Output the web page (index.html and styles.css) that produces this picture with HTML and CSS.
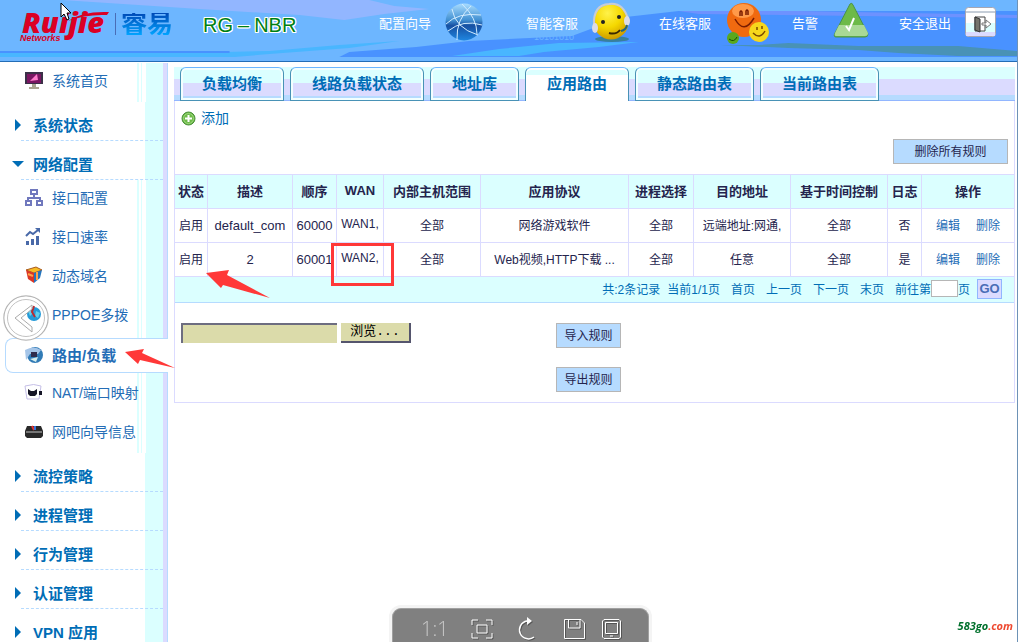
FILE: index.html
```html
<!DOCTYPE html>
<html lang="zh-CN">
<head>
  <meta charset="UTF-8">
  <meta name="viewport" content="width=device-width, initial-scale=1.0">
  <title>RG-NBR 应用路由</title>
  <link rel="stylesheet" href="styles.css">
</head>
<body>
  <div class="page">
    <header class="header">
      <svg class="header-bg" viewBox="0 0 1019 61" preserveAspectRatio="none" aria-hidden="true">
        <path d="M62 0H370L395 6L430 9L385 14L345 20L300 15L200 9Z" fill="#92b6ff"/>
        <path d="M340 57L350 52L417 47L470 41L573 36L600 26L627 17L680 11H1019V57Z" fill="#4992ff"/>
        <path d="M680 11H800L1019 15V18L700 14Z" fill="#6d92ff"/>
        <path d="M453 56L500 49L560 43L640 42L600 47L545 52L520 56Z" fill="#49b6ff"/>
        <path d="M0 52H225L270 51L340 45L400 41L350 48L270 54L235 57H0Z" fill="#49b6ff"/>
        <path d="M0 51H230V53H0Z" fill="#4992ff"/>
        <path d="M722 45H760L790 43L860 46H960L1019 51V56H960L900 53L860 50L790 48Z" fill="#4992b6"/>
        <text x="486" y="37" class="bits-big">10110</text>
        <text x="535" y="40" class="bits-small">10101010</text>
      </svg>
      <div class="logo">
        <div class="logo-mark">
          <span class="logo-name">Ruijie</span>
          <span class="logo-sub">Networks</span>
          <svg class="logo-swoosh" width="42" height="11" viewBox="0 0 42 11" aria-hidden="true"><path d="M0 10Q14 0 41 1L39 4Q18 3 0 10Z" fill="#db0024"/></svg>
        </div>
        <span class="logo-cn">睿易</span>
      </div>
      <div class="model">RG<span class="dash">–</span>NBR</div>
      <nav class="top-nav">
        <a href="#">配置向导
          <svg width="53" height="40" viewBox="0 0 53 40">
            <defs><linearGradient id="globe" x1="0" y1="0" x2="0" y2="1"><stop offset="0" stop-color="#a8dcff"/><stop offset=".45" stop-color="#4190d2"/><stop offset=".6" stop-color="#1750a2"/><stop offset="1" stop-color="#1f86e0"/></linearGradient></defs>
            <circle cx="19" cy="20" r="18.500" fill="url(#globe)"/>
            <g fill="none" stroke="#d2ecff" stroke-width="1"><path d="M7 7Q10 26 33 33M1 22Q13 10 36 13M17 2Q32 16 32 32M12 38Q11 17 26 4M3 29Q18 17 37 23"/></g>
          </svg></a>
        <a href="#">智能客服
          <svg width="39" height="40" viewBox="0 0 39 40">
            <defs><radialGradient id="face" cx=".4" cy=".25" r=".8"><stop offset="0" stop-color="#fff24a"/><stop offset=".5" stop-color="#f5d800"/><stop offset="1" stop-color="#c79200"/></radialGradient></defs>
            <ellipse cx="20" cy="37" rx="17" ry="3" fill="#38809c"/>
            <circle cx="19" cy="20" r="17.500" fill="url(#face)"/>
            <path d="M2 23Q1 3 17 2Q31 0 36 17" fill="none" stroke="#c8ccd6" stroke-width="2"/>
            <ellipse cx="3" cy="26" rx="3" ry="5" fill="#dcdce6"/><ellipse cx="35" cy="19" rx="3" ry="5" fill="#dcdce6"/>
            <circle cx="11" cy="20" r="2" fill="#222"/><circle cx="27" cy="15" r="2" fill="#222"/>
            <path d="M17 31Q24 33 28 28" fill="none" stroke="#3a2800" stroke-width="2"/><path d="M35 23Q34 28 29 29" fill="none" stroke="#24647c" stroke-width="2"/>
          </svg></a>
        <a href="#">在线客服
          <svg width="39" height="40" viewBox="0 0 39 40">
            <circle cx="19" cy="18" r="17" fill="#f06a10"/><ellipse cx="18" cy="9" rx="11" ry="7" fill="#ff9a49"/>
            <path d="M15 14V10Q16 8 17 10V14M21 13V9Q22 7 23 9V13M10 17Q19 33 29 16" fill="none" stroke="#7a1c00" stroke-width="1.500"/>
            <circle cx="34" cy="30" r="10" fill="#f7d71c"/><path d="M32 28V25M37 27V24M28 31Q35 38 40 29" fill="none" stroke="#7a4a00" stroke-width="1.500"/>
            <circle cx="8" cy="36" r="6" fill="#5aa81e"/><path d="M4 37Q9 41 12 35" fill="none" stroke="#174d00"/>
          </svg></a>
        <a href="#">告警
          <svg width="39" height="40" viewBox="0 0 39 40">
            <path d="M18 2Q20 0 21 3L36 32Q36 35 33 35H4Q1 35 3 31Z" fill="#6dba49" stroke="#4a9448"/>
            <path d="M7 23H32L36 31Q36 34 33 34H4Q2 34 3 31Z" fill="#a9d996"/>
            <path d="M14 24L17 28L22 16" fill="none" stroke="#fff" stroke-width="2"/>
          </svg></a>
        <a href="#">安全退出
          <svg width="31" height="31" viewBox="0 0 31 31">
            <rect x=".5" y=".5" width="30" height="29" rx="3" fill="#fff" stroke="#a6a6b2"/>
            <path d="M1 16H30V25H1Z" fill="#dbffff"/><path d="M1 25H30V29H1Z" fill="#dbdbff"/><path d="M1 5H30" stroke="#8c9cb0"/>
            <path d="M10 10H20V24H10Z" fill="#fff" stroke="#444"/><path d="M10 10L15 12V25L10 23Z" fill="#74746c" stroke="#333"/>
            <path d="M17 16H21V13L26 17L21 21V18H17Z" fill="#fff" stroke="#777"/>
          </svg></a>
      </nav>
    </header>

    <div class="layout">
      <aside class="sidebar">
        <ul class="menu">
          <li class="menu-item"><a href="#">
            <svg class="menu-icon" viewBox="0 0 20 20"><rect x="1" y="2" width="18" height="12" fill="#3b3048"/><rect x="3" y="4" width="14" height="9" fill="#7a1662"/><path d="M6 11L13 4L14 10Z" fill="#ff7bcb"/><path d="M8 14H12V17H15V19H5V17H8Z" fill="#aaa592"/></svg>
            系统首页</a></li>
          <li class="menu-group"><a href="#">系统状态</a></li>
          <li class="menu-group open"><a href="#">网络配置</a></li>
          <li class="menu-item"><a href="#">
            <svg class="menu-icon" viewBox="0 0 20 20" fill="none" stroke="#7078bd" stroke-width="2"><path d="M7 3H13V7H7ZM2 14H7V18H2ZM13 14H18V18H13ZM10 7V11M4 14V11H16V14"/></svg>
            接口配置</a></li>
          <li class="menu-item"><a href="#">
            <svg class="menu-icon" viewBox="0 0 20 20" fill="#4969a8"><path d="M2 15H5V19H2ZM7 13H10V19H7ZM12 10H15V19H12Z"/><path d="M2 10L6 6L9 8L14 4" fill="none" stroke="#4969a8" stroke-width="2"/><path d="M11 2H16V7Z"/></svg>
            接口速率</a></li>
          <li class="menu-item"><a href="#">
            <svg class="menu-icon" viewBox="0 0 20 20"><path d="M2 5L12 2L18 5L10 8Z" fill="#f7bb23" stroke="#a85b20"/><path d="M2 5L10 8V18L4 14Z" fill="#db3624"/><path d="M10 8L18 5L16 13L10 18Z" fill="#2475be"/><path d="M4 9L9 11M13 7V15" stroke="#ffa349" stroke-width="2"/></svg>
            动态域名</a></li>
          <li class="menu-item"><a href="#">
            <svg class="menu-icon" viewBox="0 0 20 20"><circle cx="10" cy="10" r="7" fill="#249ad8"/><path d="M4 7Q8 5 9 9L6 12ZM12 7L16 9L14 14L11 12Z" fill="#60d0ed"/><path d="M10 2L8 8L11 13" fill="none" stroke="#bd2b30" stroke-width="2"/></svg>
            PPPOE多拨</a></li>
          <li class="menu-item active"><a href="#">
            <svg class="menu-icon" viewBox="0 0 20 20"><circle cx="11" cy="10" r="8" fill="#317bb6"/><path d="M1 5Q10 0 17 5L14 9H6L2 15Z" fill="#a5c5e8"/><rect x="7" y="7" width="6" height="5" fill="#302c4c"/><path d="M6 14L14 12L12 17Z" fill="#d6eeee"/></svg>
            路由/负载</a>
            <svg class="arrow arrow-menu" width="52" height="20" viewBox="0 0 52 20"><path d="M0 4L19 1L17 5L50 20L15 12L13 16Z"/></svg></li>
          <li class="menu-item"><a href="#">
            <svg class="menu-icon" viewBox="0 0 20 20"><path d="M1 4Q10 1 17 4L15 17H3Z" fill="#fff" stroke="#c5bfe7"/><path d="M4 7L7 9H10L13 7V12L11 14H6L4 12Z" fill="#161626"/><path d="M15 9H18V13H15" fill="#161626"/></svg>
            NAT/端口映射</a></li>
          <li class="menu-item"><a href="#">
            <svg class="menu-icon" viewBox="0 0 20 20"><path d="M3 5H17L19 10V15L17 17H3L1 15V10Z" fill="#292929"/><path d="M2 10H18V12H2Z" fill="#777"/><path d="M8 5L10 9" stroke="#e63535" stroke-width="2"/><path d="M11 5V9" stroke="#3575dd" stroke-width="2"/></svg>
            网吧向导信息</a></li>
          <li class="menu-group"><a href="#">流控策略</a></li>
          <li class="menu-group"><a href="#">进程管理</a></li>
          <li class="menu-group"><a href="#">行为管理</a></li>
          <li class="menu-group"><a href="#">认证管理</a></li>
          <li class="menu-group"><a href="#">VPN 应用</a></li>
        </ul>
      </aside>

      <main class="main">
        <nav class="tabs">
          <a href="#" class="tab">负载均衡</a>
          <a href="#" class="tab">线路负载状态</a>
          <a href="#" class="tab">地址库</a>
          <a href="#" class="tab current">应用路由</a>
          <a href="#" class="tab">静态路由表</a>
          <a href="#" class="tab">当前路由表</a>
        </nav>

        <div class="panel">
          <div class="toolbar">
            <a href="#" class="add">
              <svg width="15" height="15" viewBox="0 0 15 15"><circle cx="7.500" cy="7.500" r="6.500" fill="#6dba49" stroke="#498f38"/><circle cx="7.500" cy="7.500" r="5" fill="none" stroke="#9cd67c"/><path d="M7.500 4V11M4 7.500H11" stroke="#fff" stroke-width="2"/></svg>
              添加</a>
            <button type="button" class="btn btn-wide">删除所有规则</button>
          </div>

          <table class="rules">
            <colgroup>
              <col class="c-state"><col class="c-desc"><col class="c-order"><col class="c-wan"><col class="c-host"><col>
              <col class="c-proc"><col class="c-host"><col class="c-host"><col class="c-log"><col class="c-ops">
            </colgroup>
            <thead>
              <tr>
                <th>状态</th><th>描述</th><th>顺序</th><th>WAN</th><th>内部主机范围</th><th>应用协议</th>
                <th>进程选择</th><th>目的地址</th><th>基于时间控制</th><th>日志</th><th>操作</th>
              </tr>
            </thead>
            <tbody>
              <tr>
                <td>启用</td><td class="num">default_com</td><td class="num">60000</td><td>WAN1,</td><td>全部</td><td>网络游戏软件</td>
                <td>全部</td><td>远端地址:网通,</td><td>全部</td><td>否</td><td><a href="#">编辑</a><a href="#">删除</a></td>
              </tr>
              <tr>
                <td class="marked">启用<svg class="arrow arrow-state" width="66" height="30" viewBox="0 0 66 30"><path d="M0 3L23 0L21 5L64 28L17 15L15 18Z"/></svg></td>
                <td class="num">2</td><td class="num">60001</td><td class="marked">WAN2,<span class="mark-box"></span></td><td>全部</td><td>Web视频,HTTP下载 ...</td>
                <td>全部</td><td>任意</td><td>全部</td><td>是</td><td><a href="#">编辑</a><a href="#">删除</a></td>
              </tr>
            </tbody>
          </table>

          <div class="pager">
            <span>共:2条记录</span>
            <span class="pages">当前1/1页</span>
            <a href="#">首页</a>
            <a href="#">上一页</a>
            <a href="#">下一页</a>
            <a href="#">末页</a>
            <label>前往第<input type="text" class="page-no">页</label>
            <button type="button" class="go">GO</button>
          </div>

          <div class="transfer">
            <div class="file">
              <input type="text" class="file-path" aria-label="规则文件">
              <button type="button" class="browse">浏览...</button>
            </div>
            <div class="actions">
              <button type="button" class="btn">导入规则</button>
              <button type="button" class="btn">导出规则</button>
            </div>
          </div>
        </div>
      </main>
    </div>
  </div>

  <button type="button" class="prev" aria-label="上一张">
    <svg width="46" height="46" viewBox="0 0 46 46" fill="none"><circle cx="23" cy="23" r="22" stroke="#b6b6b6" stroke-width="1.500"/><circle cx="23" cy="23" r="20.500" stroke="#fff" stroke-width="2"/><circle cx="23" cy="23" r="18.500" stroke="#c2c2c2"/><path d="M29 10L12 23L29 37V32L18 23L29 14Z" fill="#fff" stroke="#aaa"/></svg>
  </button>

  <div class="viewer">
    <div class="tools">
      <button type="button" class="ratio">1:1</button>
      <button type="button" aria-label="全屏"><svg width="22" height="20" viewBox="0 0 22 20"><path d="M1 6V1H7M15 1H21V6M21 14V19H15M7 19H1V14M6 6H16V14H6Z"/></svg></button>
      <button type="button" aria-label="旋转"><svg width="22" height="24" viewBox="0 0 22 24"><path d="M19 20A9 9 0 1 1 12 4H14" stroke-width="1.500"/><path d="M12 0L17 4L12 8Z" fill="#fff" stroke="none"/></svg></button>
    </div>
    <span class="sep"></span>
    <div class="tools save">
      <button type="button" aria-label="保存"><svg width="22" height="20" viewBox="0 0 22 20"><path d="M1.500 .5H18L21.500 4V19.500H1.500ZM5.500 .5V9H17V.5M14 3V6"/></svg></button>
      <button type="button" aria-label="设备"><svg width="20" height="20" viewBox="0 0 20 20"><path d="M2 .5H17L18.500 2V18L17 19.500H2L.5 18V2ZM3.500 3.500H15.500V14.500H3.500ZM8 17H11"/></svg></button>
    </div>
  </div>

  <div class="watermark">583go<span>.com</span></div>
  <svg class="cursor" width="13" height="20" viewBox="0 0 13 20" aria-hidden="true"><path d="M1 1V15L4 12L7 18L9 17L7 11H11Z" fill="#fff" stroke="#000"/></svg>
</body>
</html>
```
FILE: styles.css
```css
* {
  box-sizing: border-box;
}
body {
  margin: 0;
  height: 100vh;
  overflow: hidden;
  background: #fff;
  color: #24244d;
  font-family: "Liberation Sans", "Noto Sans CJK SC", sans-serif;
  font-size: 12px;
}
a {
  color: #006db6;
  text-decoration: none;
}
button, input {
  font: inherit;
  margin: 0;
  padding: 0;
}
button {
  cursor: pointer;
}
.page {
  min-height: 100vh;
  margin-right: 1px;
  border-right: 1px solid #6d92b6;
}

/* header */
.header {
  position: relative;
  display: flex;
  height: 62px;
  padding: 0 21px 0 20px;
  background: #6db6ff;
  border-bottom: 1px solid #246db6;
}
.header-bg {
  position: absolute;
  left: 0;
  top: 0;
  width: 100%;
  height: 100%;
}
.bits-big {
  font-size: 17px;
  font-weight: bold;
  fill: #6db6ff;
}
.bits-small {
  font-size: 9px;
  fill: #6db6ff;
}
.logo, .model, .top-nav {
  position: relative;
  display: flex;
}
.logo {
  height: 48px;
  align-items: center;
}
.logo-mark {
  position: relative;
  display: flex;
  flex-direction: column;
  width: 95px;
  padding-top: 6px;
  color: #db0024;
  font-weight: bold;
  font-style: italic;
}
.logo-name {
  padding-left: 2px;
  font-family: "Open Sans", sans-serif;
  font-size: 29px;
  font-weight: 800;
  line-height: 22px;
}
.logo-sub {
  font-size: 9px;
  line-height: 10px;
}
.logo-swoosh {
  position: absolute;
  left: 48px;
  top: 6px;
}
.logo-cn {
  padding-left: 5px;
  border-left: 1px solid #496db6;
  font-size: 26px;
  font-weight: bold;
  line-height: 22px;
  color: transparent;
  background: linear-gradient(#0049b6, #00a4ff);
  background-clip: text;
  -webkit-background-clip: text;
}
.model {
  margin-left: 30px;
  font-size: 20px;
  line-height: 50px;
  color: #008012;
  text-shadow: 1px 0 #fff, -1px 0 #fff, 0 1px #fff, 0 -1px #fff, 1px 1px #fff, -1px -1px #fff, 1px -1px #fff, -1px 1px #fff;
}
.dash {
  margin: 0 5px;
}
.top-nav {
  margin-left: auto;
  height: 44px;
  align-items: center;
  gap: 28px;
}
.top-nav a {
  display: flex;
  align-items: center;
  gap: 14px;
  color: #fff;
  font-size: 13px;
  white-space: nowrap;
}
.top-nav svg {
  overflow: visible;
}

/* left menu */
.layout {
  display: flex;
  align-items: flex-start;
}
.sidebar {
  flex: none;
  width: 168px;
  margin-top: 1px;
  background: linear-gradient(90deg, #fff 137px, #dbffff 137px, #dbffff 139px, #fff 139px, #fff 141px, #dbffff 141px, #dbffff 142px, #fff 142px, #fff 146px, #dbffff 146px, #dbffff 163px, #dbdbff 163px, #dbdbff 167px, #b6dbff 167px);
}
.menu {
  list-style: none;
  margin: 0;
  padding: 0;
}
.menu-item {
  height: 39px;
}
.menu-item a {
  display: flex;
  align-items: center;
  height: 100%;
  padding: 0 0 5px 24px;
  gap: 8px;
  color: #246db6;
  font-size: 14px;
  white-space: nowrap;
}
.menu-icon {
  flex: none;
  width: 20px;
  height: 20px;
}
.menu-item.active {
  position: relative;
  height: 35px;
  margin: 2px 0 2px 5px;
  background: #fff;
  border: solid #b6dbff;
  border-width: 1px 0 1px 1px;
  border-radius: 8px 0 0 8px;
}
.menu-item.active a {
  padding: 0 0 2px 18px;
  font-size: 15px;
  font-weight: bold;
}
.menu-group {
  height: 39px;
  padding: 7px 0 0 15px;
  margin-right: 5px;
  background: linear-gradient(90deg, #fff 145px, #dbffff 145px);
}
.menu-group a {
  display: flex;
  align-items: center;
  height: 32px;
  margin-left: 6px;
  padding-left: 12px;
  border-bottom: 1px dashed #b6dbff;
  font-size: 15px;
  font-weight: bold;
}
.menu-group a::before {
  content: "";
  margin: 0 12px 0 -18px;
  border: solid transparent;
  border-width: 6px 0 6px 6px;
  border-left-color: #006db6;
}
.menu-group.open a::before {
  margin: 0 9px 0 -21px;
  border-width: 6px 6px 0;
  border-top-color: #006db6;
  border-left-color: transparent;
}

/* tabs */
.main {
  flex: 1;
  min-width: 0;
  margin: 5px 2px 0 6px;
}
.tabs {
  display: flex;
  gap: 6px;
  height: 34px;
  padding-left: 6px;
  background: linear-gradient(#dbffff 12px, #dbdbff 12px, #dbdbff 28px, #b6dbff 28px);
  border-bottom: 1px solid #92b6ff;
}
.tab {
  height: 34px;
  padding: 0 21px;
  border: 1px solid #4992b6;
  border-top-color: #6db6ff;
  border-radius: 6px 6px 0 0;
  background: linear-gradient(#dbffff 15px, #dbdbff 15px, #dbdbff 28px, #b6dbff 28px);
  box-shadow: inset 0 0 0 2px #f2ffff;
  font-size: 15px;
  font-weight: bold;
  line-height: 32px;
  white-space: nowrap;
}
.tab.current {
  border-bottom: 0;
  background: linear-gradient(#dbffff 7px, #fff 7px);
  box-shadow: inset 0 2px #fff;
}

/* rule list */
.panel {
  border: solid #dbdbff;
  border-width: 0 1px 1px;
}
.toolbar {
  display: flex;
  justify-content: space-between;
  align-items: flex-start;
  height: 73px;
  padding: 8px 6px 0;
}
.add {
  display: flex;
  align-items: center;
  gap: 5px;
  font-size: 14px;
  line-height: 18px;
}
.btn {
  width: 65px;
  height: 25px;
  padding-bottom: 2px;
  background: #b6dbff;
  border: 1px solid #b6b6b6;
  color: #24244d;
}
.btn-wide {
  width: 115px;
  margin-top: 30px;
}
.rules {
  width: calc(100% + 2px);
  margin: 0 -1px;
  table-layout: fixed;
  border-collapse: collapse;
}
.rules th, .rules td {
  height: 34px;
  padding: 0 0 3px;
  border: 1px solid #dbdbff;
  text-align: center;
  white-space: nowrap;
}
.rules th {
  background: #dbffff;
  font-size: 13px;
}
.rules .num {
  padding: 0;
  font-size: 13px;
}
.rules td a {
  margin: 0 8px;
  color: #246db6;
}
.c-state { width: 33px; }
.c-desc { width: 85px; }
.c-order { width: 44px; }
.c-wan { width: 47px; }
.c-host { width: 97px; }
.c-proc { width: 65px; }
.c-log { width: 34px; }
.c-ops { width: 93px; }

.pager {
  display: flex;
  justify-content: flex-end;
  align-items: center;
  gap: 11px;
  height: 26px;
  padding: 0 12px 2px 0;
  background: #dbffff;
  border-bottom: 1px solid #b6dbff;
  color: #006db6;
}
.pages {
  margin-left: -4px;
}
.pager label {
  display: flex;
  align-items: center;
}
.page-no {
  width: 27px;
  height: 17px;
  border: 1px solid #b6b6b6;
  background: #fff;
}
.go {
  width: 25px;
  height: 20px;
  margin-left: -4px;
  background: #dbdbff;
  border: 1px solid #92b6ff;
  color: #496db6;
  font-size: 13px;
  font-weight: bold;
}

/* import and export */
.transfer {
  display: grid;
  grid-template-columns: 375px 1fr;
  padding: 20px 6px 10px;
}
.file {
  display: flex;
  align-items: flex-start;
  gap: 4px;
}
.file-path {
  width: 156px;
  height: 20px;
  background: #dbdbaa;
  border: solid #6d6d80;
  border-width: 2px 0 0 2px;
}
.browse {
  width: 70px;
  height: 20px;
  background: #dbdbaa;
  border: solid #55556d;
  border-width: 0 2px 2px 0;
  color: #000;
  font-family: "Liberation Mono", "Noto Sans CJK SC", monospace;
  font-size: 13px;
  line-height: 16px;
}
.actions {
  display: flex;
  flex-direction: column;
  gap: 19px;
}

/* marks drawn over the page */
.marked {
  position: relative;
}
.mark-box {
  position: absolute;
  left: -6px;
  top: 0;
  width: 63px;
  height: 43px;
  border: 3px solid #ff3838;
  z-index: 1;
}
.arrow {
  position: absolute;
  fill: #ff3838;
  z-index: 1;
}
.arrow-state {
  left: 31px;
  top: 27px;
}
.arrow-menu {
  left: 119px;
  top: 9px;
}

/* picture viewer */
.prev {
  position: fixed;
  left: 3px;
  top: 295px;
  width: 46px;
  height: 46px;
  border: 0;
  background: none;
}
.viewer {
  position: fixed;
  left: 392px;
  bottom: 0;
  display: flex;
  align-items: center;
  gap: 13px;
  width: 257px;
  height: 34px;
  padding: 7px 28px 0;
  background: #808080;
  border: 1px solid #a0a0a0;
  border-bottom: 0;
  border-radius: 9px 9px 0 0;
  box-shadow: 0 0 0 3px #f4f4f4;
}
.tools {
  display: flex;
  align-items: center;
  gap: 22px;
}
.tools.save {
  gap: 17px;
}
.viewer button {
  display: flex;
  border: 0;
  background: none;
  color: #c8c8c8;
}
.viewer svg {
  fill: none;
  stroke: #fff;
  filter: drop-shadow(1px 1px 0 #555);
}
.viewer .ratio {
  font-family: "Open Sans", sans-serif;
  font-size: 20px;
  font-weight: 300;
  line-height: 20px;
}
.sep {
  width: 1px;
  height: 24px;
  background: #aaa;
}
.watermark {
  position: fixed;
  right: 6px;
  bottom: 8px;
  color: #00702c;
  font-family: "Open Sans", sans-serif;
  font-size: 11px;
  font-style: italic;
  font-weight: bold;
  line-height: 16px;
}
.watermark span {
  color: #ee4930;
}
.cursor {
  position: fixed;
  left: 60px;
  top: 2px;
}
```
